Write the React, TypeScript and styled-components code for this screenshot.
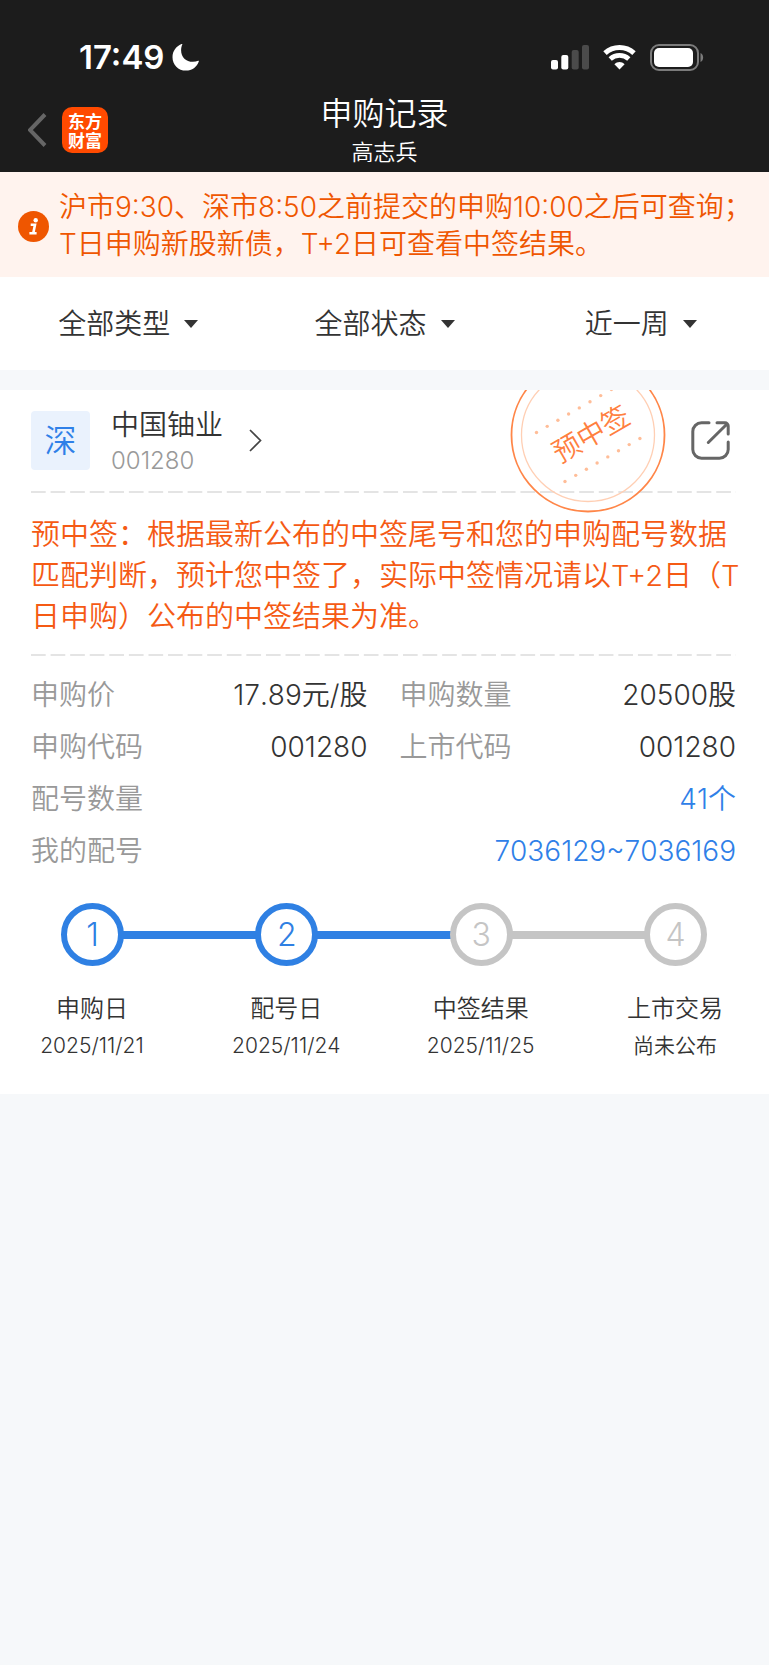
import React from "react";
import styled, { createGlobalStyle } from "styled-components";

const GlobalStyle = createGlobalStyle`
  *, *::before, *::after { box-sizing: border-box; }
  body {
    margin: 0;
    background: #f6f8fa;
    color: #333;
    font-family: Inter, "Noto Sans CJK SC", sans-serif;
    font-size: 28px;
    font-weight: 350;
  }
  button, select { font: inherit; color: inherit; }
  a { color: inherit; text-decoration: none; }
  h1, h2, p, dl, dd, dt, ol { margin: 0; padding: 0; font-weight: inherit; }
`;

const Page = styled.main`
  min-height: 100vh;
  background: #f6f8fa;
`;

const TopBar = styled.header`
  background: #1c1c1c;
  color: #fff;
`;

const StatusBar = styled.div`
  display: flex;
  align-items: center;
  justify-content: space-between;
  height: 92px;
  padding: 22px 65px 0 79px;
`;

const Clock = styled.div`
  display: flex;
  align-items: center;
  gap: 8px;
  font-size: 33px;
  font-weight: 600;
  line-height: 40px;
`;

const Signals = styled.div`
  display: flex;
  align-items: center;
  gap: 14px;
`;

const TitleBar = styled.div`
  display: grid;
  grid-template-columns: 1fr auto 1fr;
  align-items: center;
  height: 80px;
  padding: 0 28px 6px;
`;

const TitleStart = styled.div`
  display: flex;
  align-items: center;
  gap: 14px;
`;

const IconButton = styled.button`
  display: flex;
  padding: 0;
  border: 0;
  background: none;
  cursor: pointer;
`;

const Logo = styled.span`
  display: grid;
  place-content: center;
  width: 46px;
  height: 46px;
  border-radius: 10px;
  background: #ff4a00;
  font-family: "Noto Sans CJK SC", sans-serif;
  font-size: 17px;
  font-weight: 700;
  line-height: 19px;
`;

const Titles = styled.div`
  text-align: center;
`;

const Title = styled.h1`
  font-size: 32px;
  line-height: 44px;
`;

const Account = styled.p`
  font-size: 22px;
  line-height: 32px;
`;

const Notice = styled.section`
  display: flex;
  align-items: center;
  gap: 10px;
  padding: 17px 18px 14px;
  background: #fff3ee;
  color: #ef5600;
  line-height: 37px;
  white-space: nowrap;
`;

const NoticeIcon = styled.svg`
  flex: none;
`;

const Filters = styled.form`
  display: grid;
  grid-template-columns: repeat(3, 1fr);
  height: 93px;
  padding-top: 1px;
  background: #fff;
`;

const Filter = styled.label`
  display: flex;
  align-items: center;
  justify-content: center;
  gap: 14px;
`;

const Select = styled.select`
  field-sizing: content;
  appearance: none;
  padding: 0;
  border: 0;
  background: none;
  line-height: 41px;
`;

const Caret = styled.span`
  border: solid transparent;
  border-width: 8px 7px 0;
  border-top-color: #333;
`;

const Card = styled.article`
  position: relative;
  overflow: hidden;
  margin-top: 20px;
  padding: 0 33px 30px 31px;
  background: #fff;
`;

const CardHead = styled.div`
  display: flex;
  align-items: center;
  justify-content: space-between;
  height: 101px;
  padding: 0 6px 0 0;
`;

const Stock = styled.a`
  display: flex;
  align-items: center;
`;

const Market = styled.span`
  width: 59px;
  height: 59px;
  margin-right: 21px;
  border-radius: 4px;
  background: #eaf2fd;
  color: #2f80e8;
  font-size: 32px;
  line-height: 59px;
  text-align: center;
`;

const StockText = styled.span`
  display: grid;
  margin-right: 26px;
  padding-top: 2px;
`;

const StockName = styled.span`
  line-height: 38px;
`;

const StockCode = styled.span`
  color: #999;
  font-size: 24px;
  line-height: 34px;
`;

const Stamp = styled.svg`
  position: absolute;
  top: -33px;
  right: 103px;
  pointer-events: none;
`;

const Divider = styled.hr`
  height: 2px;
  margin: 0;
  border: 0;
  background: linear-gradient(90deg, #e4e4e4 75%, transparent 75%) 0 0 / calc(100% / 36) 100%;
`;

const Explain = styled.p`
  padding: 21px 0 17px;
  color: #f55a14;
  font-size: 29px;
  line-height: 41px;
  white-space: nowrap;
`;

const Facts = styled.dl`
  display: grid;
  grid-template-columns: 1fr 1fr;
  column-gap: 32px;
  padding-top: 13px;
  font-kerning: none;
`;

const Fact = styled.div<{ $wide?: boolean }>`
  display: flex;
  justify-content: space-between;
  grid-column: ${(p) => (p.$wide ? "1 / -1" : "auto")};
  line-height: 52px;
`;

const FactName = styled.dt`
  color: #999;
`;

const FactValue = styled.dd<{ $link?: boolean }>`
  color: ${(p) => (p.$link ? "#2f80e8" : "#333")};
`;

const Track = styled.div`
  display: flex;
  align-items: center;
  padding: 26px 29px 0 30px;
`;

const Dot = styled.span<{ $done: boolean }>`
  display: grid;
  flex: none;
  place-content: center;
  width: 63px;
  height: 63px;
  border: 6px solid ${(p) => (p.$done ? "#2f80e3" : "#c5c5c5")};
  border-radius: 50%;
  color: ${(p) => (p.$done ? "#2f80e3" : "#c5c5c5")};
  font-size: 32px;
  font-weight: 300;
`;

const Bar = styled.span<{ $done: boolean }>`
  flex: 1;
  height: 8px;
  margin: 0 -1px;
  background: ${(p) => (p.$done ? "#2f80e3" : "#c5c5c5")};
`;

const Steps = styled.ol`
  display: flex;
  justify-content: space-between;
  margin: 24px -19px 0;
  list-style: none;
`;

const Step = styled.li`
  width: 160px;
  text-align: center;
`;

const StepName = styled.p`
  font-size: 24px;
  line-height: 38px;
`;

const StepDate = styled.p`
  font-size: 21px;
  font-kerning: none;
  line-height: 36px;
`;

const filters = [
  { name: "类型", value: "全部类型" },
  { name: "状态", value: "全部状态" },
  { name: "时间", value: "近一周" },
];

const facts = [
  { name: "申购价", value: "17.89元/股" },
  { name: "申购数量", value: "20500股" },
  { name: "申购代码", value: "001280" },
  { name: "上市代码", value: "001280" },
  { name: "配号数量", value: "41个", link: true },
  { name: "我的配号", value: "7036129~7036169", link: true },
];

const steps = [
  { name: "申购日", date: "2025/11/21", done: true },
  { name: "配号日", date: "2025/11/24", done: true },
  { name: "中签结果", date: "2025/11/25", done: false },
  { name: "上市交易", date: "尚未公布", done: false },
];

const dots = [0, 1, 2, 3, 4, 5, 6, 7];

export default function App() {
  return (
    <Page>
      <GlobalStyle />
      <TopBar>
        <StatusBar>
          <Clock>
            17:49
            <svg width="27" height="27" viewBox="0 0 27 27" aria-hidden="true">
              <path
                d="M10.300 .4C9.500 2.200 9.100 4 9.100 6.200c0 6.900 4.900 11.600 11.800 11.600 2 0 3.700-.4 5.200-1 .5-.2.900.1.700.6C24.900 23 20 26.600 14 26.600 6.200 26.600.5 20.900.5 13.200.5 7.300 4.100 2.300 9.500.1c.6-.2 1-.1.8.3Z"
                fill="#fff"
              />
            </svg>
          </Clock>
          <Signals>
            <svg width="38" height="25" viewBox="0 0 38 25" aria-hidden="true">
              <rect x="0" y="15" width="7" height="9.500" rx="2" fill="#fff" />
              <rect x="10.300" y="10" width="7" height="14.500" rx="2" fill="#fff" />
              <rect x="20.700" y="5" width="7" height="19.500" rx="2" fill="#4b4b4b" />
              <rect x="31" y="0" width="7" height="24.500" rx="2" fill="#4b4b4b" />
            </svg>
            <svg width="33" height="25" viewBox="0 0 33 25" aria-hidden="true">
              <path d="M2 8.200C10.200.6 22.800.6 31 8.200" fill="none" stroke="#fff" strokeWidth="5" />
              <path d="M7.200 14C12.500 9.200 20.500 9.200 25.800 14" fill="none" stroke="#fff" strokeWidth="4.800" />
              <path d="M11.400 19.200c2.900-2.900 7.300-2.900 10.200 0L16.500 24.400Z" fill="#fff" />
            </svg>
            <svg width="54" height="27" viewBox="0 0 54 27" aria-hidden="true">
              <rect x="1" y="1" width="47" height="25" rx="8" fill="none" stroke="#7b7b7b" strokeWidth="2" />
              <rect x="4" y="4" width="39" height="19" rx="5" fill="#fff" />
              <path d="M50.500 9c3.500 1 3.500 8 0 9Z" fill="#7b7b7b" />
            </svg>
          </Signals>
        </StatusBar>
        <TitleBar>
          <TitleStart>
            <IconButton type="button" aria-label="返回">
              <svg width="20" height="36" viewBox="0 0 20 36" aria-hidden="true">
                <path d="M17 2.500 2 18l15 15.500" fill="none" stroke="#666" strokeWidth="4" />
              </svg>
            </IconButton>
            <Logo>
              <span>
                东方
                <br />
                财富
              </span>
            </Logo>
          </TitleStart>
          <Titles>
            <Title>申购记录</Title>
            <Account>高志兵</Account>
          </Titles>
        </TitleBar>
      </TopBar>

      <Notice>
        <NoticeIcon width="31" height="31" viewBox="0 0 31 31" aria-hidden="true">
          <circle cx="15.500" cy="15.500" r="15.500" fill="#ef5600" />
          <circle cx="17.700" cy="9.200" r="2.200" fill="#fff" />
          <path d="M12.700 13.800h4.300l-1.700 8.300M11.400 22.300h7.200" fill="none" stroke="#fff" strokeWidth="2.600" />
        </NoticeIcon>
        <p>
          沪市9:30、深市8:50之前提交的申购10:00之后可查询；
          <br />
          T日申购新股新债，T+2日可查看中签结果。
        </p>
      </Notice>

      <Filters>
        {filters.map((f) => (
          <Filter key={f.name}>
            <Select aria-label={f.name} defaultValue={f.value}>
              <option>{f.value}</option>
            </Select>
            <Caret />
          </Filter>
        ))}
      </Filters>

      <Card>
        <CardHead>
          <Stock href="#stock">
            <Market>深</Market>
            <StockText>
              <StockName>中国铀业</StockName>
              <StockCode>001280</StockCode>
            </StockText>
            <svg width="13" height="23" viewBox="0 0 13 23" aria-hidden="true">
              <path d="M1 1l10.500 10.500L1 22" fill="none" stroke="#444" strokeWidth="1.700" />
            </svg>
          </Stock>
          <IconButton type="button" aria-label="分享">
            <svg width="39" height="39" viewBox="0 0 39 39" aria-hidden="true">
              <path
                d="M18 1.800h-7.500A8.700 8.700 0 0 0 1.800 10.500v18a8.700 8.700 0 0 0 8.700 8.700h18a8.700 8.700 0 0 0 8.700-8.700V21M26 1.800h8a3.200 3.200 0 0 1 3.200 3.200v8M17.300 21.500 36 3"
                fill="none"
                stroke="#666"
                strokeWidth="3"
                strokeLinecap="round"
              />
            </svg>
          </IconButton>
        </CardHead>
        <Stamp width="156" height="156" viewBox="-78 -78 156 156">
          <circle r="76.500" fill="none" stroke="#ff8648" strokeWidth="1.800" />
          <circle r="66.500" fill="none" stroke="#ffcfb4" strokeWidth="1.300" />
          {dots.map((i) => (
            <circle key={`u${i}`} cx={-51.500 + i * 10.700} cy={-2.500 - i * 6.150} r="1.700" fill="#ffbd98" />
          ))}
          {dots.map((i) => (
            <circle key={`l${i}`} cx={-23 + i * 10.700} cy={46.500 - i * 6.150} r="1.700" fill="#ffbd98" />
          ))}
          <text
            transform="translate(3 -1) rotate(-30)"
            y="10"
            textAnchor="middle"
            fontFamily='"Noto Sans CJK SC", sans-serif'
            fontSize="28"
            fill="#ff7f3f"
          >
            预中签
          </text>
        </Stamp>
        <Divider />
        <Explain>
          预中签：根据最新公布的中签尾号和您的申购配号数据
          <br />
          匹配判断，预计您中签了，实际中签情况请以T+2日（T
          <br />
          日申购）公布的中签结果为准。
        </Explain>
        <Divider />
        <Facts>
          {facts.map((f) => (
            <Fact key={f.name} $wide={f.link}>
              <FactName>{f.name}</FactName>
              <FactValue $link={f.link}>{f.link ? <a href="#numbers">{f.value}</a> : f.value}</FactValue>
            </Fact>
          ))}
        </Facts>
        <Track>
          {steps.map((s, i) => (
            <React.Fragment key={s.name}>
              {i > 0 && <Bar $done={steps[i - 1].done} />}
              <Dot $done={s.done}>{i + 1}</Dot>
            </React.Fragment>
          ))}
        </Track>
        <Steps>
          {steps.map((s) => (
            <Step key={s.name}>
              <StepName>{s.name}</StepName>
              <StepDate>{s.date}</StepDate>
            </Step>
          ))}
        </Steps>
      </Card>
    </Page>
  );
}
